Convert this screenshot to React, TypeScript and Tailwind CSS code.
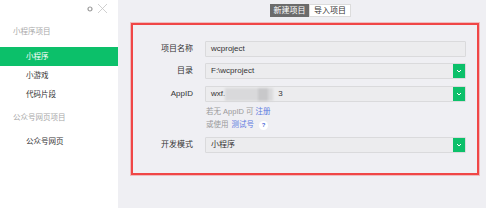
import React from 'react';

const font = { fontFamily: '"Liberation Sans", "Noto Sans CJK SC", sans-serif' };

function Chevron() {
  return (
    <svg width="6" height="4" viewBox="0 0 6 4" fill="none">
      <path d="M1 1 L3 3 L5 1" stroke="#ffffff" strokeWidth="1" />
    </svg>
  );
}

function Field({ label, children, select }: { label: string; children: React.ReactNode; select?: boolean }) {
  return (
    <div className="flex items-center h-[16px]">
      <div className="w-[60px] text-right text-[8px] text-[#333]">{label}</div>
      <div className="ml-[12px] w-[261px] h-full flex items-stretch bg-[#ececee] border border-[#dadadc] rounded-[1px]">
        <div className="flex-1 flex items-center pl-[5px] text-[8px] text-[#333] leading-none">{children}</div>
        {select && (
          <div className="w-[12px] bg-[#0cc06a] flex items-center justify-center">
            <Chevron />
          </div>
        )}
      </div>
    </div>
  );
}

export default function App() {
  const items = ['小程序', '小游戏', '代码片段'];

  return (
    <div className="flex w-[486px] h-[208px] overflow-hidden" style={font}>
      {/* Sidebar */}
      <div className="w-[118px] h-full bg-white flex flex-col">
        <div className="h-[16px] flex items-start justify-end pr-[10px] pt-[3px] gap-[4px]">
          <svg width="6" height="6" viewBox="0 0 6 6" className="mt-[3px]">
            <circle cx="3" cy="3" r="2" fill="none" stroke="#9a9a9a" strokeWidth="1.2" />
          </svg>
          <svg width="11" height="11" viewBox="0 0 11 11">
            <path d="M1 1 L10 10 M10 1 L1 10" stroke="#c4c4c4" strokeWidth="0.8" />
          </svg>
        </div>
        <div className="mt-[10px] pl-[13px] h-[12px] leading-[12px] text-[7.5px] text-[#a8a8a8]">小程序项目</div>
        <div className="mt-[9px] flex flex-col">
          {items.map((item, i) => (
            <div
              key={item}
              className={`h-[19px] flex items-center pl-[26px] text-[7.5px] ${
                i === 0 ? 'bg-[#0cc06a] text-white' : 'text-[#333]'
              }`}
            >
              {item}
            </div>
          ))}
        </div>
        <div className="mt-[8px] pl-[13px] h-[12px] leading-[12px] text-[7.5px] text-[#a8a8a8]">公众号网页项目</div>
        <div className="mt-[8px] h-[19px] flex items-center pl-[26px] text-[7.5px] text-[#333]">公众号网页</div>
      </div>

      {/* Main */}
      <div className="flex-1 h-full bg-[#efeff3] flex flex-col">
        <div className="pt-[4px] pl-[152px] flex">
          <div className="h-[13px] w-[39px] flex items-center justify-center bg-[#6b6b6b] text-white text-[8px]">新建项目</div>
          <div className="h-[13px] w-[42px] flex items-center justify-center bg-white border border-[#dcdcdc] text-[#333] text-[8px]">导入项目</div>
        </div>

        <div className="ml-[13px] mt-[6px] w-[348px] h-[152px] border-2 border-[#f04646] shadow-[0_0_0_1px_rgba(240,70,70,0.3)] flex flex-col pt-[16px]">
          <Field label="项目名称">wcproject</Field>
          <div className="mt-[6px]">
            <Field label="目录" select>F:\wcproject</Field>
          </div>
          <div className="mt-[7px]">
            <Field label="AppID" select>
              <span>wxf.</span>
              <span className="relative inline-block w-[48px] h-[13px] bg-[#d9d9db] blur-[1px]">
                <span className="absolute right-[5px] top-0 w-[10px] h-[13px] bg-[#c8c8ca]" />
              </span>
              <span className="ml-[5px]">3</span>
            </Field>
          </div>
          <div className="mt-[4px] ml-[73px] h-[12px] leading-[12px] text-[7.5px] text-[#9a9a9a]">
            若无 AppID 可 <span className="text-[#5d78e0]">注册</span>
          </div>
          <div className="mt-[1px] ml-[73px] h-[12px] flex items-center text-[7.5px] text-[#9a9a9a]">
            或使用 <span className="ml-[3px] text-[#5d78e0]">测试号</span>
            <span className="ml-[5px] w-[9px] h-[9px] rounded-full bg-white flex items-center justify-center text-[6px] font-bold text-[#4a68d8]">?</span>
          </div>
          <div className="mt-[6px]">
            <Field label="开发模式" select>小程序</Field>
          </div>
        </div>
      </div>
    </div>
  );
}
